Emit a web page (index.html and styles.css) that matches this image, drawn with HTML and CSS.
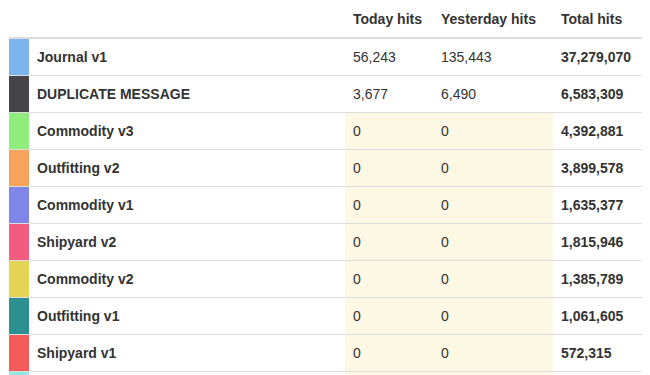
FILE: index.html
```html
<!DOCTYPE html>
<html>
<head>
<meta charset="utf-8">
<link rel="stylesheet" href="styles.css">
</head>
<body>
<div class="wrap">
<table class="stats">
  <colgroup>
    <col class="c-swatch"><col class="c-name"><col class="c-today"><col class="c-yest"><col class="c-total">
  </colgroup>
  <thead>
    <tr><th></th><th></th><th>Today hits</th><th>Yesterday hits</th><th>Total hits</th></tr>
  </thead>
  <tbody>
    <tr><td class="sw s1"></td><td class="name">Journal v1</td><td>56,243</td><td>135,443</td><td class="total">37,279,070</td></tr>
    <tr><td class="sw s2"></td><td class="name">DUPLICATE MESSAGE</td><td>3,677</td><td>6,490</td><td class="total">6,583,309</td></tr>
    <tr><td class="sw s3"></td><td class="name">Commodity v3</td><td class="warn">0</td><td class="warn">0</td><td class="total">4,392,881</td></tr>
    <tr><td class="sw s4"></td><td class="name">Outfitting v2</td><td class="warn">0</td><td class="warn">0</td><td class="total">3,899,578</td></tr>
    <tr><td class="sw s5"></td><td class="name">Commodity v1</td><td class="warn">0</td><td class="warn">0</td><td class="total">1,635,377</td></tr>
    <tr><td class="sw s6"></td><td class="name">Shipyard v2</td><td class="warn">0</td><td class="warn">0</td><td class="total">1,815,946</td></tr>
    <tr><td class="sw s7"></td><td class="name">Commodity v2</td><td class="warn">0</td><td class="warn">0</td><td class="total">1,385,789</td></tr>
    <tr><td class="sw s8"></td><td class="name">Outfitting v1</td><td class="warn">0</td><td class="warn">0</td><td class="total">1,061,605</td></tr>
    <tr><td class="sw s9"></td><td class="name">Shipyard v1</td><td class="warn">0</td><td class="warn">0</td><td class="total">572,315</td></tr>
    <tr><td class="sw s10"></td><td class="name"></td><td class="warn"></td><td class="warn"></td><td class="total"></td></tr>
  </tbody>
</table>
</div>
</body>
</html>
```
FILE: styles.css
```css
html, body {
  margin: 0;
  padding: 0;
  background: #fff;
}
body {
  font-family: "Liberation Sans", Arial, Helvetica, sans-serif;
  font-size: 14px;
  line-height: 20px;
  color: #333;
  overflow: hidden;
}
.wrap {
  padding: 1px 8px 0 9px;
}
.stats {
  width: 633px;
  border-collapse: collapse;
  border-spacing: 0;
  table-layout: fixed;
}
.c-swatch { width: 20px; }
.c-name { width: 316px; }
.c-today { width: 88px; }
.c-yest { width: 120px; }
.c-total { width: 89px; }
.stats th {
  font-weight: bold;
  text-align: left;
  padding: 8px;
  border-bottom: 2px solid #ddd;
  white-space: nowrap;
}
.stats td {
  padding: 8px;
  border-top: 1px solid #ddd;
  height: 20px;
  white-space: nowrap;
}
.stats td.sw { padding: 0; }
.stats td.name, .stats td.total { font-weight: bold; }
.stats td.warn { background: #fcf8e3; }
.s1 { background: #7cb5ec; }
.s2 { background: #434348; }
.s3 { background: #90ed7d; }
.s4 { background: #f7a35c; }
.s5 { background: #8085e9; }
.s6 { background: #f15c80; }
.s7 { background: #e4d354; }
.s8 { background: #2b908f; }
.s9 { background: #f45b5b; }
.s10 { background: #91e8e1; }
```
